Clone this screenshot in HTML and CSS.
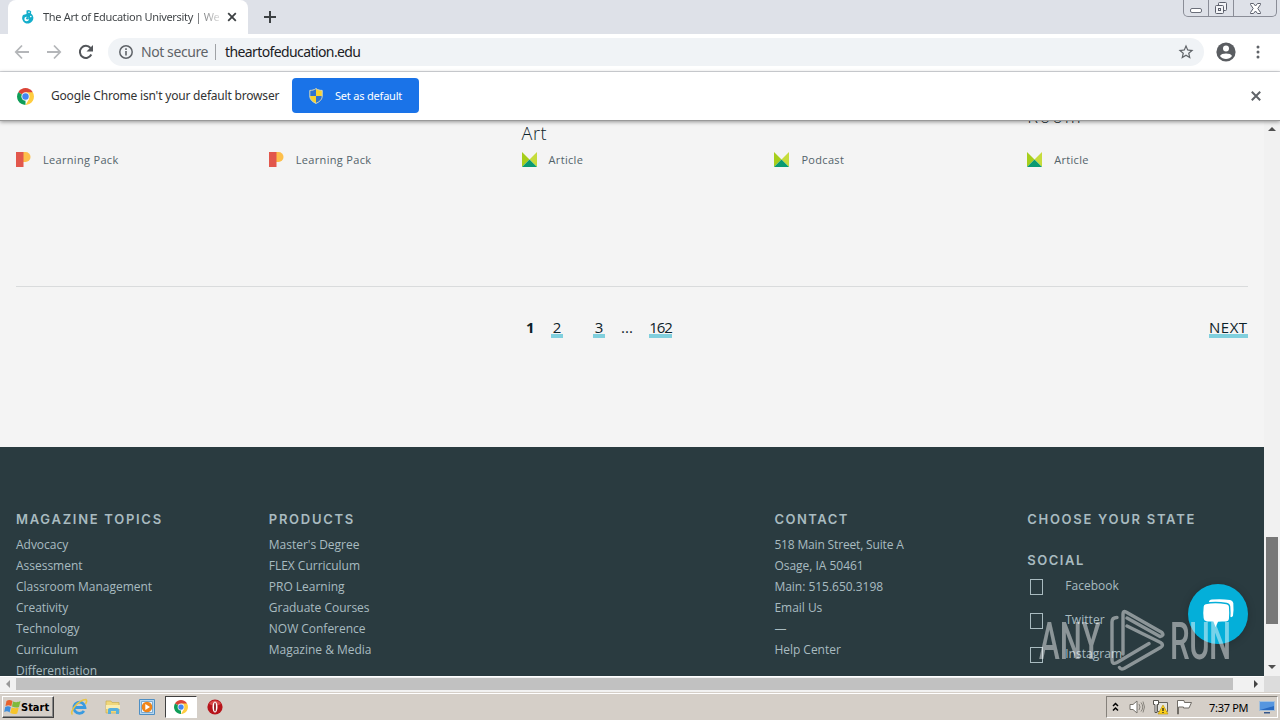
FILE: index.html
```html
<!DOCTYPE html>
<html lang="en">
<head>
<meta charset="utf-8">
<title>The Art of Education University</title>
<link rel="stylesheet" href="styles.css">
</head>
<body>
<svg width="0" height="0" class="defs">
  <symbol id="chrome" viewBox="0 0 16 16">
    <path fill="#db4437" d="M8 8 1.100 4A8 8 0 0 1 14.900 4z"/>
    <path fill="#0f9d58" d="M8 8v8A8 8 0 0 1 1.100 4z"/>
    <path fill="#ffcd40" d="M8 4h6.900A8 8 0 0 1 8 16l3.500-6z"/>
    <circle cx="8" cy="8" r="3.900" fill="#f1f1f1"/><circle cx="8" cy="8" r="3" fill="#4285f4"/>
  </symbol>
  <symbol id="pack" viewBox="0 0 15 15">
    <path fill="#fdbf4b" d="M7 0h2.500a5 5 0 0 1 0 10H7z"/><path fill="#e2574c" d="M0 0h7.500v15H0z"/>
  </symbol>
  <symbol id="article" viewBox="0 0 15 15">
    <path fill="#a6ce1b" d="M0 0v15L7.500 7.500z"/><path fill="#c6dc3c" d="M15 0v15L7.500 7.500z"/><path fill="#0a9a72" d="M0 15 7.500 7.500 15 15z"/>
  </symbol>
</svg>
<div class="screen">
  <header class="tabstrip">
    <div class="tab">
      <svg class="favicon" width="14" height="14" viewBox="0 0 14 14"><path fill="#14aecb" d="M5.500.6 8 0l2.200 1.200L10 3.400A5.600 5.600 0 1 1 2 5l3.500-1z"/><circle cx="5.600" cy="9" r="2.300" fill="#fff"/><circle cx="6.400" cy="8.300" r="1.300" fill="#14aecb"/><circle cx="8" cy="2.300" r=".8" fill="#fff"/><circle cx="9.800" cy="6.600" r=".8" fill="#fff"/></svg>
      <span class="tab-title">The Art of Education University | We</span>
      <svg class="tab-close" width="10" height="10" viewBox="0 0 10 10"><path d="M1.200 1.200l7.600 7.600M8.800 1.200 1.200 8.800" stroke="#3c4043" stroke-width="1.800"/></svg>
    </div>
    <svg class="newtab" width="12" height="12" viewBox="0 0 12 12"><path d="M6 0v12M0 6h12" stroke="#3c4043" stroke-width="2"/></svg>
    <div class="winbtns">
      <span class="wb w1"><svg width="14" height="8" viewBox="0 0 14 8"><rect x="1.500" y="2.500" width="11" height="4" rx="1.500" fill="#fff" stroke="#6b6f7a"/></svg></span>
      <span class="wb w2"><svg width="14" height="14" viewBox="0 0 14 14"><g fill="#f3f4f7" stroke="#5c606c"><rect x="4.500" y="1.500" width="8" height="8" rx="1"/><rect x="1.500" y="4.500" width="8" height="8" rx="1"/><rect x="4.500" y="7.500" width="2" height="2"/></g></svg></span>
      <span class="wb w3"><svg width="13" height="11" viewBox="0 0 13 11"><path d="M1.500.5h3l2 2.500 2-2.500h3v1L8.800 5.500l2.700 4v1h-3l-2-2.500-2 2.500h-3v-1l2.700-4-2.700-4z" fill="#fff" stroke="#5c606c"/></svg></span>
    </div>
  </header>
  <div class="toolbar">
    <svg class="nav" width="16" height="16" viewBox="0 0 16 16" fill="none" stroke="#b4b6b9" stroke-width="1.800"><path d="M15 8H2M8 1.500 1.800 8 8 14.500"/></svg>
    <svg class="nav" width="16" height="16" viewBox="0 0 16 16" fill="none" stroke="#b4b6b9" stroke-width="1.800"><path d="M1 8h13M8 1.500 14.200 8 8 14.500"/></svg>
    <svg class="nav" width="16" height="16" viewBox="0 0 16 16"><path d="M13.300 10.500A6 6 0 1 1 12.500 4" fill="none" stroke="#53565a" stroke-width="2"/><path d="M15 1v6.500H8.500z" fill="#53565a"/></svg>
    <div class="omnibox">
      <svg width="14" height="14" viewBox="0 0 14 14"><circle cx="7" cy="7" r="6.200" fill="none" stroke="#5f6368" stroke-width="1.500"/><path d="M7 6v4.500M7 3.300v1.600" stroke="#5f6368" stroke-width="1.600"/></svg>
      <span class="secure">Not secure</span><i class="bar"></i><span class="url">theartofeducation.edu</span>
      <svg class="star" width="18" height="18" viewBox="0 0 24 24"><path fill="#5f6368" d="M22 9.240l-7.190-.62L12 2 9.190 8.630 2 9.240l5.460 4.730L5.820 21 12 17.270 18.180 21l-1.630-7.030zM12 15.400l-3.760 2.270 1-4.280-3.320-2.880 4.380-.38L12 6.100l1.710 4.040 4.380.38-3.320 2.880 1 4.280z"/></svg>
    </div>
    <svg class="avatar" width="20" height="20" viewBox="0 0 20 20"><circle cx="10" cy="10" r="9.600" fill="#5a5d61"/><circle cx="10" cy="6.500" r="3" fill="#fff"/><path fill="#fff" d="M4 14c1-3.300 11-3.300 12 0-2.500 4-9.500 4-12 0z"/></svg>
    <svg class="dots" width="4" height="14" viewBox="0 0 4 14" fill="#5f6368"><circle cx="2" cy="2" r="1.500"/><circle cx="2" cy="7" r="1.500"/><circle cx="2" cy="12" r="1.500"/></svg>
  </div>
  <div class="infobar">
    <svg class="chr" width="17" height="17"><use href="#chrome"/></svg>
    <span class="info-text">Google Chrome isn't your default browser</span>
    <span class="default-btn"><svg width="14" height="16" viewBox="0 0 14 16"><path d="M7 .5c2 1.500 4 1.800 6.200 1.800V8H7z" fill="#f8d32e"/><path d="M7 .5C5 2 3 2.300.8 2.300V8H7z" fill="#2f74d0"/><path d="M7 8v7.500C4.300 14.200.8 12 .8 8z" fill="#f8d32e"/><path d="M7 8h6.200c0 4-3.500 6.200-6.200 7.500z" fill="#2f74d0"/><path d="M7 .6C5 2 3 2.400.8 2.400V8c0 4 3.500 6.200 6.200 7.400C9.700 14.200 13.200 12 13.200 8V2.400C11 2.400 9 2 7 .6z" fill="none" stroke="#d8d9b8"/></svg><span>Set as default</span></span>
    <svg class="info-close" width="10" height="10" viewBox="0 0 10 10"><path d="M.8.8l8.400 8.400M9.200.8.800 9.200" stroke="#5f6368" stroke-width="2"/></svg>
  </div>
  <div class="view">
    <main class="page">
      <section class="cards">
        <div class="card"><p class="meta"><svg width="15" height="15"><use href="#pack"/></svg>Learning Pack</p></div>
        <div class="card"><p class="meta"><svg width="15" height="15"><use href="#pack"/></svg>Learning Pack</p></div>
        <div class="card"><h3>Art</h3><p class="meta"><svg width="15" height="15"><use href="#article"/></svg>Article</p></div>
        <div class="card"><p class="meta"><svg width="15" height="15"><use href="#article"/></svg>Podcast</p></div>
        <div class="card"><h3 class="raised">Room</h3><p class="meta"><svg width="15" height="15"><use href="#article"/></svg>Article</p></div>
      </section>
      <nav class="pager"><div class="pages"><b>1</b><a>2</a><a class="three">3</a><span>...</span><a>162</a></div><a class="next">NEXT</a></nav>
      <footer class="footer">
        <div><h4>MAGAZINE TOPICS</h4><ul><li>Advocacy</li><li>Assessment</li><li>Classroom Management</li><li>Creativity</li><li>Technology</li><li>Curriculum</li><li>Differentiation</li></ul></div>
        <div><h4>PRODUCTS</h4><ul><li>Master's Degree</li><li>FLEX Curriculum</li><li>PRO Learning</li><li>Graduate Courses</li><li>NOW Conference</li><li>Magazine &amp; Media</li></ul></div>
        <div></div>
        <div><h4 class="contact-h">CONTACT</h4><ul><li class="address">518 Main Street, Suite A</li><li>Osage, IA 50461</li><li>Main: 515.650.3198</li><li>Email Us</li><li>—</li><li>Help Center</li></ul></div>
        <div><h4>CHOOSE YOUR STATE</h4><h4 class="social-h">SOCIAL</h4><ul class="social"><li><i></i>Facebook</li><li><i></i>Twitter</li><li><i></i>Instagram</li></ul></div>
      </footer>
    </main>
    <div class="vscroll"><i class="up"></i><div class="vthumb"></div><i class="down"></i></div>
  </div>
  <div class="hscroll"><i class="left"></i><div class="hthumb"></div><i class="right"></i><div class="corner"></div></div>
  <div class="taskbar">
    <div class="start"><svg width="17" height="16" viewBox="0 0 17 16"><path d="M2.500 2c2-1.700 4-1.200 6 0L7.300 7.300C5.500 6 4 6 1.500 7z" fill="#e8622c"/><path d="M9 2.500c2.500 1 4.500 1 7.500-.5L15 8c-2.500 1-4.500.5-7-.5z" fill="#7fba3c"/><path d="M1.200 8c2-1.200 3.800-1 5.600 0l-1.200 5.500C4 12.200 2.500 12 .2 13z" fill="#3f8edc"/><path d="M7.700 8.500c2 1 4.500 1 7 .3L13.200 14.500c-2.500 1-4.500.6-7-.5z" fill="#f7c52b"/></svg>Start</div>
    <svg class="q q1" width="18" height="18" viewBox="0 0 18 18"><path d="M14 13A5.600 5.600 0 1 1 15 9.500H5" fill="none" stroke="#3a9be0" stroke-width="2.800"/><path d="M2.500 16.500C-1 14 8 2 16 1.500c1 1 .5 3-.5 4.500" fill="none" stroke="#e9c544" stroke-width="1.600"/></svg>
    <svg class="q q2" width="16" height="16" viewBox="0 0 16 16"><path d="M1 2h5l1 1.500h7V14H1z" fill="#f0d77b" stroke="#c9ad50" stroke-width=".7"/><path d="M1 6h14v4H1z" fill="#faedb0"/><path d="M3 15v-4.500q0-1.500 2-1.500h7q2 0 2 1.500V15h-3v-3H6v3z" fill="#57b0dd"/></svg>
    <svg class="q q3" width="16" height="16" viewBox="0 0 16 16"><path d="M.5.5h15v15H.5z" fill="#b7d7ef" stroke="#4e8fc4"/><path d="M2.500 2.500h11v11h-11z" fill="#e9f3fa" stroke="#7aaad1"/><circle cx="8" cy="8" r="5.300" fill="#f08519"/><path d="M6.300 5v6L11 8z" fill="#fff"/></svg>
    <div class="active"><svg width="14" height="14"><use href="#chrome"/></svg></div>
    <svg class="q q5" width="16" height="16" viewBox="0 0 16 16"><circle cx="8" cy="8" r="7.600" fill="#b7141b"/><path d="M2 5a7 7 0 0 1 12 0q-6 3-12 0z" fill="#d94a4a"/><ellipse cx="8" cy="8" rx="2.500" ry="5.500" fill="#fff"/><ellipse cx="8" cy="8" rx=".9" ry="4.500" fill="#8b1015"/></svg>
    <div class="tray">
      <svg width="7" height="10" viewBox="0 0 7 10"><path d="M1 4l2.500-2.500L6 4M1 8.500 3.500 6 6 8.500" fill="none" stroke="#000" stroke-width="1.500"/></svg>
      <svg class="spk" width="16" height="16" viewBox="0 0 16 16"><path d="M1 5.500h3L8 2v12l-4-3.500H1z" fill="#fff" stroke="#77736c"/><path d="M10 5q2 3 0 6M12 3.500q3.500 4.500 0 9M14 2.500q3 5.500 0 11" fill="none" stroke="#88847d"/></svg>
      <svg class="net" width="17" height="16" viewBox="0 0 17 16"><path d="M5.500 3.500h10v9h-10z" fill="#e5e5df" stroke="#66645e"/><path d="M1.500 1.500h5v4h-1.500v8h-2v-8H1.500z" fill="#fff" stroke="#55534e"/><path d="M11 6l5 9H6z" fill="#fbd01b" stroke="#b88e00" stroke-width=".6"/><path d="M11 9v3M11 13v1" stroke="#222" stroke-width="1.300"/></svg>
      <svg class="flag" width="16" height="16" viewBox="0 0 16 16"><path d="M1.500 15V1.500H8l.5 2h7L13 9H7.500V8h-5v7z" fill="#fff" stroke="#716d67"/></svg>
      <span class="clock">7:37 PM</span>
      <svg class="desk" width="16" height="14" viewBox="0 0 16 14"><path d="M.5 1.500h15v9H.5z" fill="#2869c0" stroke="#a4c0dc"/><path d="M1 2h14v4L1 10z" fill="#5696df"/><path d="M5 12h6v1.500H5z" fill="#34568a"/></svg>
    </div>
  </div>
  <div class="chat"><svg width="34" height="34" viewBox="0 0 34 34"><path d="M8 5q0-2 3-2.400Q20 1.600 29 3q3 .5 3.300 3.500.6 7-.3 12-.4 1.500-2 1.800" fill="#fff"/><path d="M4.500 6.500Q14 4.500 25.500 6.500q2.800.5 3.100 3 .6 6.500 0 12.500-.4 2.600-3 3l-8.100.5L14.500 32 12 25.500l-6.500-.5Q2.600 24.600 2 22q-.8-6.500 0-12.500.3-2.500 2.500-3z" fill="#fff" stroke="#04afd9" stroke-width="1.400"/></svg></div>
  <svg class="watermark" width="196" height="64" viewBox="0 0 196 64">
    <g transform="translate(3 50) scale(.6 1)"><text x="0" y="0" textLength="103">ANY</text></g>
    <g transform="translate(134 50) scale(.6 1)"><text x="0" y="0" textLength="102">RUN</text></g>
    <path d="M81 8.500Q76 8.500 76 13v38q0 5 5 2.500l32-19M87 45V5q0-3.500 3-2l36 20.500q2.500 3-2 4L91 9M91 17l33.500 16.500q4 2.500 0 5L88 59.500q-3 1.500-4.500-1" fill="none" stroke="#fff" stroke-width="3.400" stroke-linecap="round" stroke-linejoin="round"/>
  </svg>
</div>
</body>
</html>
```
FILE: styles.css
```css
*{box-sizing:border-box}
body{margin:0;overflow:hidden}
svg{display:block;flex:none}
.defs{position:absolute}
i{display:block}
h3,h4,p,ul{margin:0;padding:0;list-style:none}
.screen{position:relative;width:1280px;height:720px;display:flex;flex-direction:column;overflow:hidden;font-family:"Noto Sans","DejaVu Sans",sans-serif;background:#fff}
.tabstrip{height:34px;flex:none;background:#dee1e8;display:flex;padding-left:8px}
.tab{width:240px;height:34px;background:#fff;border-radius:8px 8px 0 0;display:flex;align-items:center;padding-left:13px}
.tab-title{margin-left:8px;width:176px;white-space:nowrap;overflow:hidden;font-size:11px;letter-spacing:-.31px;line-height:18px;color:transparent;background:linear-gradient(90deg,#3c4043 150px,#d8d8d8 175px);background-clip:text}
.tab-close{margin-left:8px}
.newtab{margin:11px 0 0 16px}
.winbtns{margin-left:auto;margin-right:3px;height:17px;display:flex;border:1px solid #8a8d97;border-top:0;border-radius:0 0 5px 5px}
.wb{display:flex;align-items:center;justify-content:center;width:25px;border-right:1px solid #8a8d97}
.w1{padding-top:4px}
.w3{width:42px;border:0}
.toolbar{height:38px;flex:none;display:flex;align-items:center;padding:0 0 1px 14px;border-bottom:1px solid #dadce0}
.nav{margin-right:16px}
.omnibox{width:1096px;height:28px;margin-left:-2px;background:#f0f3f6;border-radius:14px;display:flex;align-items:center;padding:0 9px 0 11px;font-size:14px}
.omnibox span{margin-top:-1px}
.secure{margin-left:8px;color:#5f6368;letter-spacing:-.42px}
.omnibox .bar{width:1px;height:16px;background:#9fa2a6;margin:0 9px 0 7px}
.url{color:#202124;letter-spacing:-.6px}
.star{margin-left:auto}
.avatar{margin-left:12px}
.dots{margin-left:20px}
.infobar{height:49px;flex:none;display:flex;align-items:center;padding:0 19px 0 17px;border-bottom:1px solid #999;box-shadow:0 1px 4px #0006;position:relative;z-index:2;background:#fff}
.info-text{margin:-1px 0 0 17px;width:229px;white-space:nowrap;font-size:12px;letter-spacing:-.19px;color:#333}
.default-btn{margin:-1px 0 0 12px;width:127px;height:35px;background:#1a73e8;border-radius:4px;color:#fff;display:flex;align-items:center;font-size:11px;letter-spacing:-.2px;padding-left:17px;gap:12px}
.info-close{margin-left:auto}
.view{height:555px;flex:none;display:flex}
.page{width:1264px;height:555px;overflow:hidden;background:#f4f4f4;font-family:"Open Sans",Lato,sans-serif;color:#0c2229}
.cards{height:166px;margin:0 16px;border-bottom:1px solid #d9dbdc;display:grid;grid-template-columns:repeat(5,1fr);gap:32px}
.card{height:46px;display:flex;flex-direction:column;justify-content:flex-end}
.card h3{font-weight:300;font-size:18px;line-height:26px;margin-bottom:6px;letter-spacing:.6px}
.card .raised{margin-bottom:23px;letter-spacing:1.9px}
.meta{display:flex;gap:12px;align-items:center;height:15px;font-size:11px;color:#53636a;letter-spacing:.32px}
.pager{height:160px;margin:0 16px;padding:31px 0 0 510px;display:flex;justify-content:space-between;align-items:flex-start;font-size:15px;line-height:18px}
.pages{display:flex}
.pages b{width:25px}
.pages a,.next{border-bottom:4px solid #80cfdd;height:20px;white-space:nowrap}
.pages a{width:12px;text-align:center}
.pages .three{margin:0 16px 0 30px}
.pages span{width:28px}
.pages a:last-child{width:23px;letter-spacing:-1px}
.next{width:39px;letter-spacing:.5px}
.footer{height:240px;background:#2a3b40;padding:63px 16px 0;display:grid;grid-template-columns:repeat(5,1fr);gap:32px;color:#a9bbc0}
.footer h4{font-family:Inter,sans-serif;font-size:13px;line-height:18px;letter-spacing:1.72px;font-weight:600;white-space:nowrap;margin-bottom:6px}
.footer li{font-size:12px;line-height:21px;white-space:nowrap;letter-spacing:-.02px}
.footer .address{letter-spacing:-.16px}
.footer .contact-h{letter-spacing:1.5px}
.footer .social-h{margin:23px 0 0;letter-spacing:1.55px}
.footer .social li{display:flex;height:34px;line-height:33px;letter-spacing:.04px}
.social i{width:13px;height:16px;border:1px solid #a9bbc0;margin:10px 22px 0 3px}
.vscroll{width:16px;background:#f1f1f1;display:flex;flex-direction:column;align-items:center;padding-top:6px}
.up,.down{border:4px solid transparent}
.up{border-top:0;border-bottom-color:#505050}
.down{border-bottom:0;border-top-color:#505050;margin-top:41px}
.vthumb{width:12px;height:87px;background:#787878;margin-top:406px}
.hscroll{height:16px;flex:none;background:#f1f1f1;display:flex;align-items:center;border-top:1px solid #fff;padding-bottom:1px}
.left,.right{border:4px solid transparent}
.left{border-left:0;border-right-color:#999;margin-left:6px}
.hthumb{width:1217px;height:12px;background:#c1c1c1;margin-left:6px}
.right{border-right:0;border-left-color:#444;margin-left:21px}
.corner{width:16px;height:16px;background:#dcdcdc;margin-left:auto}
.taskbar{height:28px;flex:none;background:#d5cfc8;border-top:1px solid #d5cfc8;box-shadow:inset 0 1px #fff;display:flex;align-items:center;padding:0 0 1px 2px;position:relative}
.start{height:22px;width:52px;margin-top:2px;border:1px solid;border-color:#fff #404040 #404040 #fff;box-shadow:inset -1px -1px #888;display:flex;align-items:center;font:bold 11px "DejaVu Sans Condensed","DejaVu Sans",sans-serif;padding-left:1px;letter-spacing:0}
.q{margin-top:2px}
.q1{margin-left:16px}.q2{margin-left:17px}.q3{margin-left:18px}.q5{margin-left:10px}
.active{width:32px;height:22px;margin:2px 0 0 10px;background:#fff;border:1px solid;border-color:#404040 #fff #fff #404040;display:flex;align-items:center;justify-content:center}
.tray{margin:2px 2px 0 auto;width:172px;height:22px;border:1px solid;border-color:#85817b #fff #fff #85817b;display:flex;align-items:center;padding-left:5px}
.spk{margin-left:10px}.net{margin-left:7px}.flag{margin-left:7px}
.clock{margin-left:17px;width:40px;font-size:11px;white-space:nowrap;letter-spacing:-.3px}
.desk{margin-left:10px}
.chat{position:absolute;left:1188px;top:584px;width:60px;height:60px;border-radius:50%;background:#04afd9;box-shadow:0 1px 8px #0003;display:flex;align-items:center;justify-content:center}
.watermark{position:absolute;left:1036px;top:609px;opacity:.46;fill:#fff;font:500 52px Roboto,sans-serif}
```
